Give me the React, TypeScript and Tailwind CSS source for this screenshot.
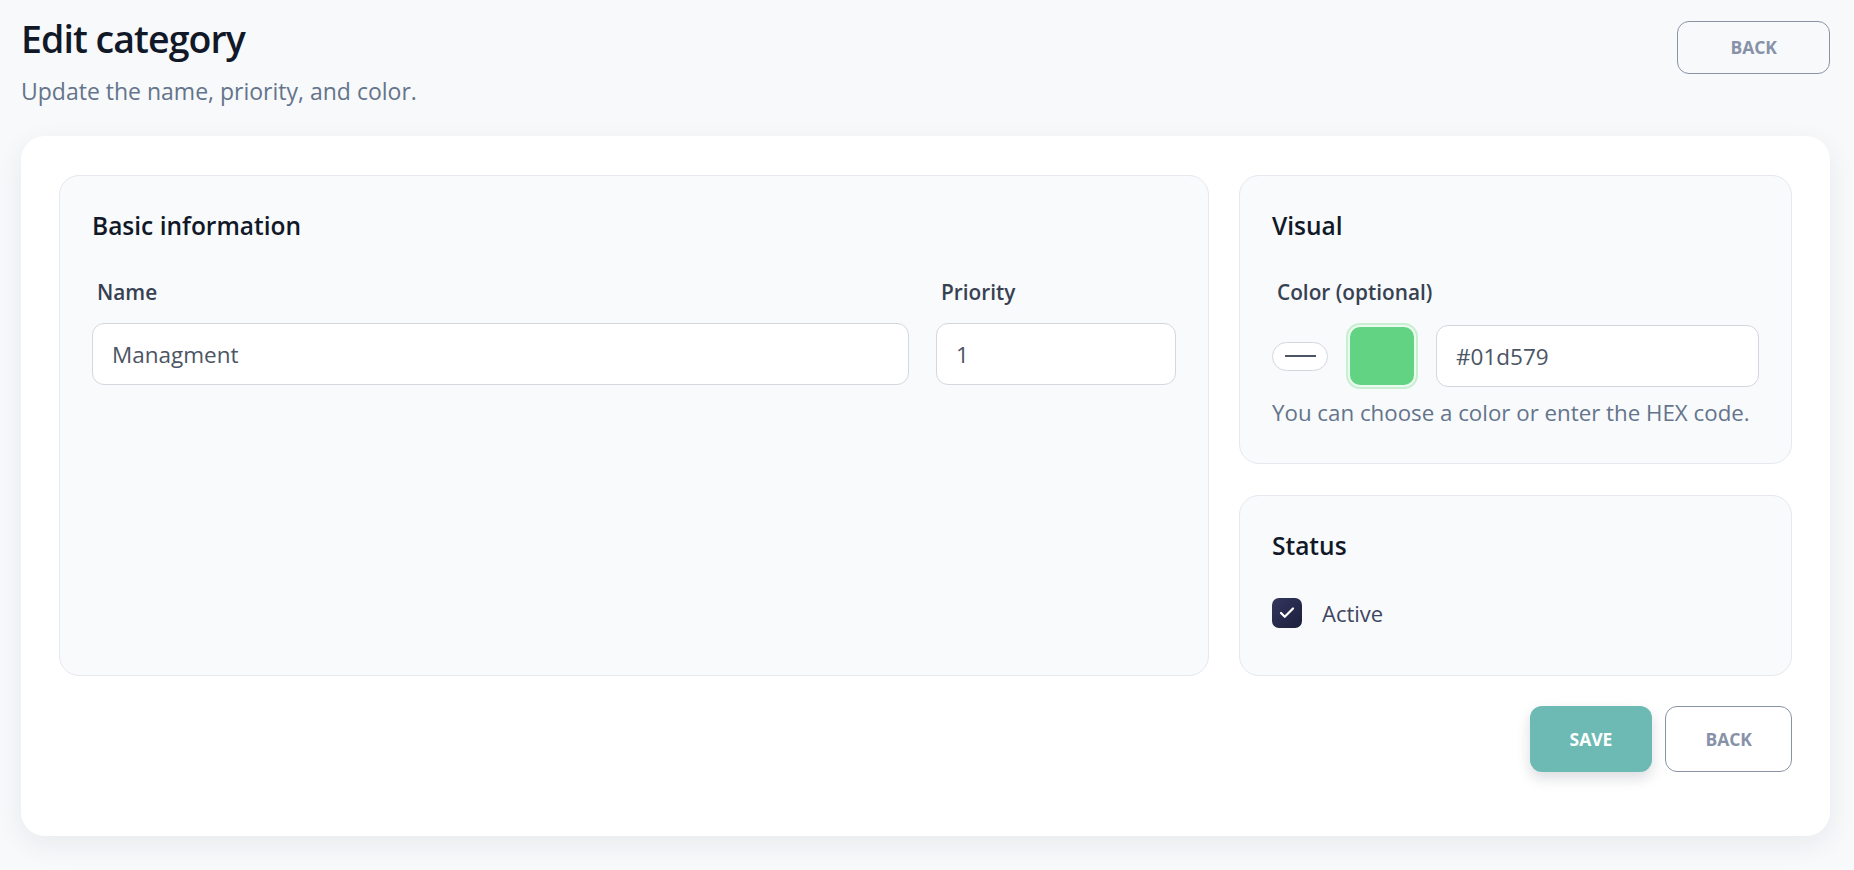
import { Check } from 'lucide-react';

const font = { fontFamily: '"Open Sans", "Noto Sans", sans-serif' };

const Panel = ({ title, children, className = '' }: { title: string; children: React.ReactNode; className?: string }) => (
  <section className={`rounded-[20px] border border-[#e5e8ee] bg-[#f8fafc] p-8 ${className}`}>
    <h2 className="text-[24.5px] leading-[36px] font-semibold text-[#111827]">{title}</h2>
    {children}
  </section>
);

const Label = ({ children }: { children: React.ReactNode }) => (
  <label className="block pl-[5px] text-[20.8px] leading-[30px] font-semibold text-[#374151]">{children}</label>
);

const inputClass =
  'w-full h-[62px] rounded-[12px] border border-[#d4d7dd] bg-white px-[19px] text-[22.5px] text-[#4b5563] outline-none';

export default function App() {
  return (
    <div style={font} className="min-h-[870px] bg-[#f8f9fb] pl-[21px] pr-[24px] pt-4 pb-[35px]">
      {/* header */}
      <div className="flex items-start justify-between">
        <div>
          <h1 className="text-[37.5px] leading-[45px] font-semibold tracking-tight text-[#111827]">Edit category</h1>
          <p className="mt-[13px] text-[23px] leading-[34px] text-[#64748b]">Update the name, priority, and color.</p>
        </div>
        <button className="mt-[5px] h-[53px] rounded-[12px] border border-[#8a93a6] px-[52px] text-[17.5px] font-bold text-[#8792a8]">
          BACK
        </button>
      </div>

      {/* form card */}
      <div className="mt-[28px] rounded-[24px] bg-white px-[38px] pt-[39px] pb-[64px] shadow-[0_8px_28px_rgba(15,23,42,0.07)]">
        <div className="grid grid-cols-[minmax(0,1fr)_553px] gap-[30px]">
          <Panel title="Basic information">
            <div className="mt-[33px] flex gap-[27px]">
              <div className="flex-1">
                <Label>Name</Label>
                <input className={`mt-4 ${inputClass}`} defaultValue="Managment" />
              </div>
              <div className="w-[240px]">
                <Label>Priority</Label>
                <input className={`mt-4 ${inputClass}`} defaultValue="1" />
              </div>
            </div>
          </Panel>

          <div className="flex flex-col gap-[31px]">
            <Panel title="Visual">
              <div className="mt-[33px]">
                <Label>Color (optional)</Label>
                <div className="mt-4 flex items-center gap-[18px]">
                  <button className="flex h-[29px] w-[56px] items-center justify-center rounded-full border border-[#d4d7dd] bg-white">
                    <span className="h-[1.5px] w-[31px] bg-[#4b5563]" />
                  </button>
                  <div className="h-[66px] w-[72px] rounded-[14px] border-[2px] border-[#c9efd3] bg-[#eafaef] p-[2px]">
                    <div className="h-full w-full rounded-[10px] bg-[#62d283]" />
                  </div>
                  <input className={`flex-1 ${inputClass} px-[18px]`} defaultValue="#01d579" />
                </div>
                <p className="mt-[5px] text-[22.3px] leading-[37px] text-[#64748b]">
                  You can choose a color or enter the HEX code.
                </p>
              </div>
            </Panel>

            <Panel title="Status">
              <div className="mt-[19px] flex h-[60px] items-center gap-[20px]">
                <span className="flex h-[30px] w-[30px] items-center justify-center rounded-[7px] bg-gradient-to-br from-[#33375f] to-[#1c1f3b]">
                  <Check className="h-[18px] w-[18px] text-white" strokeWidth={3} />
                </span>
                <span className="text-[22px] text-[#3f4660]">Active</span>
              </div>
            </Panel>
          </div>
        </div>

        {/* actions */}
        <div className="mt-[30px] flex justify-end gap-[13px]">
          <button className="h-[66px] rounded-[12px] border border-transparent bg-[#6cbab3] px-[39px] text-[17.5px] font-bold text-white shadow-[0_6px_14px_rgba(15,23,42,0.15)]">
            SAVE
          </button>
          <button className="h-[66px] rounded-[12px] border border-[#8a93a6] bg-white px-[39px] text-[17.5px] font-bold text-[#8792a8]">
            BACK
          </button>
        </div>
      </div>
    </div>
  );
}
